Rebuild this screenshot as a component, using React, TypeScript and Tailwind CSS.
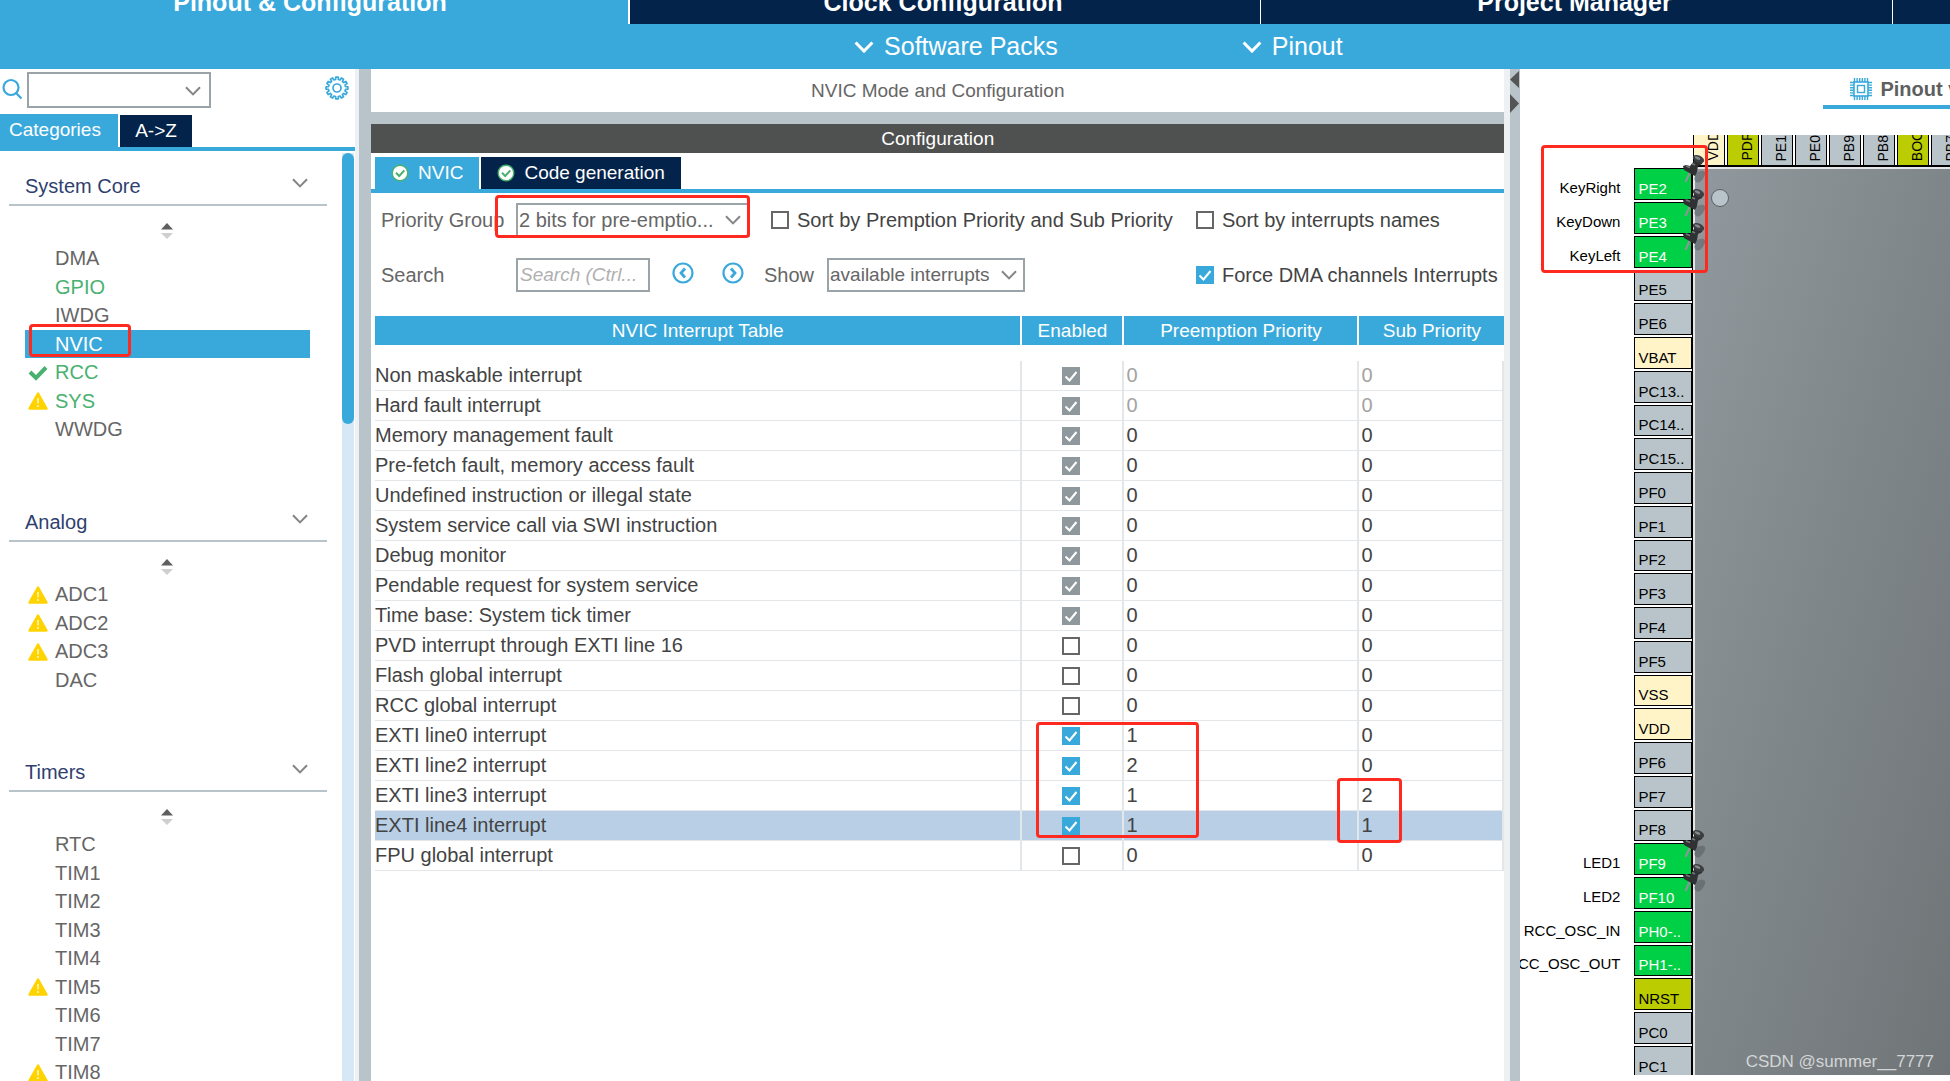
import { useState } from "react";

type Mark = "check" | "warn" | undefined;
type Item = { name: string; mark?: Mark; green?: boolean; active?: boolean };
type Group = { title: string; items: Item[] };

const groups: Group[] = [
  {
    title: "System Core",
    items: [
      { name: "DMA" },
      { name: "GPIO", green: true },
      { name: "IWDG" },
      { name: "NVIC", active: true },
      { name: "RCC", green: true, mark: "check" },
      { name: "SYS", green: true, mark: "warn" },
      { name: "WWDG" },
    ],
  },
  {
    title: "Analog",
    items: [
      { name: "ADC1", mark: "warn" },
      { name: "ADC2", mark: "warn" },
      { name: "ADC3", mark: "warn" },
      { name: "DAC" },
    ],
  },
  {
    title: "Timers",
    items: [
      { name: "RTC" },
      { name: "TIM1" },
      { name: "TIM2" },
      { name: "TIM3" },
      { name: "TIM4" },
      { name: "TIM5", mark: "warn" },
      { name: "TIM6" },
      { name: "TIM7" },
      { name: "TIM8", mark: "warn" },
    ],
  },
];

type Row = { name: string; on: boolean; locked?: boolean; fixed?: boolean; pre: number; sub: number; selected?: boolean };

const rows: Row[] = [
  { name: "Non maskable interrupt", on: true, locked: true, fixed: true, pre: 0, sub: 0 },
  { name: "Hard fault interrupt", on: true, locked: true, fixed: true, pre: 0, sub: 0 },
  { name: "Memory management fault", on: true, locked: true, pre: 0, sub: 0 },
  { name: "Pre-fetch fault, memory access fault", on: true, locked: true, pre: 0, sub: 0 },
  { name: "Undefined instruction or illegal state", on: true, locked: true, pre: 0, sub: 0 },
  { name: "System service call via SWI instruction", on: true, locked: true, pre: 0, sub: 0 },
  { name: "Debug monitor", on: true, locked: true, pre: 0, sub: 0 },
  { name: "Pendable request for system service", on: true, locked: true, pre: 0, sub: 0 },
  { name: "Time base: System tick timer", on: true, locked: true, pre: 0, sub: 0 },
  { name: "PVD interrupt through EXTI line 16", on: false, pre: 0, sub: 0 },
  { name: "Flash global interrupt", on: false, pre: 0, sub: 0 },
  { name: "RCC global interrupt", on: false, pre: 0, sub: 0 },
  { name: "EXTI line0 interrupt", on: true, pre: 1, sub: 0 },
  { name: "EXTI line2 interrupt", on: true, pre: 2, sub: 0 },
  { name: "EXTI line3 interrupt", on: true, pre: 1, sub: 2 },
  { name: "EXTI line4 interrupt", on: true, pre: 1, sub: 1, selected: true },
  { name: "FPU global interrupt", on: false, pre: 0, sub: 0 },
];

type Kind = "io" | "used" | "power" | "special";
type Pin = { name: string; kind: Kind; label?: string; pinned?: boolean };

const pinColor: Record<Kind, string> = {
  io: "bg-[#b8c4ca] text-black",
  used: "bg-[#00d046] text-white",
  power: "bg-[#fff4c8] text-black",
  special: "bg-[#bbcc01] text-black",
};

const io = (name: string): Pin => ({ name, kind: "io" });

const leftPins: Pin[] = [
  { name: "PE2", kind: "used", label: "KeyRight", pinned: true },
  { name: "PE3", kind: "used", label: "KeyDown", pinned: true },
  { name: "PE4", kind: "used", label: "KeyLeft", pinned: true },
  io("PE5"),
  io("PE6"),
  { name: "VBAT", kind: "power" },
  io("PC13.."),
  io("PC14.."),
  io("PC15.."),
  io("PF0"),
  io("PF1"),
  io("PF2"),
  io("PF3"),
  io("PF4"),
  io("PF5"),
  { name: "VSS", kind: "power" },
  { name: "VDD", kind: "power" },
  io("PF6"),
  io("PF7"),
  io("PF8"),
  { name: "PF9", kind: "used", label: "LED1", pinned: true },
  { name: "PF10", kind: "used", label: "LED2", pinned: true },
  { name: "PH0-..", kind: "used", label: "RCC_OSC_IN" },
  { name: "PH1-..", kind: "used", label: "RCC_OSC_OUT" },
  { name: "NRST", kind: "special" },
  io("PC0"),
  io("PC1"),
];

const topPins: Pin[] = [
  { name: "VDD", kind: "power" },
  { name: "PDR", kind: "special" },
  io("PE1"),
  io("PE0"),
  io("PB9"),
  io("PB8"),
  { name: "BOO", kind: "special" },
  io("PB7"),
];

function gearPath(teeth: number, outer: number, inner: number) {
  const step = (Math.PI * 2) / teeth;
  const pt = (r: number, a: number) => `${(12 + r * Math.cos(a)).toFixed(2)} ${(12 + r * Math.sin(a)).toFixed(2)}`;
  let d = "";
  for (let i = 0; i < teeth; i++) {
    const a = i * step - Math.PI / 2;
    d += `${i ? "L" : "M"}${pt(inner, a - step * 0.3)}L${pt(outer, a - step * 0.22)}L${pt(outer, a + step * 0.22)}L${pt(inner, a + step * 0.3)}`;
  }
  return d + "Z";
}

const Chevron = ({ className }: { className: string }) => (
  <svg viewBox="0 0 16 10" className={className} fill="none" stroke="currentColor" aria-hidden="true">
    <path d="M1 1.2 8 8.4 15 1.2" />
  </svg>
);

const Warn = () => (
  <svg viewBox="0 0 20 18" className="h-[18px] w-5" aria-hidden="true">
    <path d="M10 1.5 18.5 16.5H1.5Z" fill="#ffd300" stroke="#ffd300" strokeWidth="2.4" strokeLinejoin="round" />
    <path d="M10 6v5.500M10 13v2" stroke="#fff" strokeWidth="1.2" />
  </svg>
);

const Tick = () => (
  <svg viewBox="0 0 20 16" className="h-4 w-5" fill="none" aria-hidden="true">
    <path d="m2 7 6 6L18 2.5" stroke="#49b170" strokeWidth="4" />
  </svg>
);

const OkBadge = () => (
  <svg viewBox="0 0 18 18" className="size-[18px]" aria-hidden="true">
    <circle cx="9" cy="9" r="7.800" fill="#fff" stroke="#49b170" strokeWidth="1.400" />
    <path d="m5 8.8 3.2 3.2L13.3 6.400" fill="none" stroke="#49b170" strokeWidth="2" />
  </svg>
);

const Arrow = ({ d }: { d: string }) => (
  <svg viewBox="0 0 22 22" className="size-[22px]" fill="none" stroke="#39a9dc" aria-hidden="true">
    <circle cx="11" cy="11" r="9.5" strokeWidth="2.200" />
    <path d={d} strokeWidth="2.800" />
  </svg>
);

const SortIcon = () => (
  <svg viewBox="0 0 12 18" className="h-[18px] w-3" aria-hidden="true">
    <path d="M6 1 12 7.500H0Z" fill="#5f5f5f" />
    <path d="M0 11h12L6 17Z" fill="#cfcfcf" />
  </svg>
);

const PushPin = () => (
  <svg viewBox="0 0 28 34" className="absolute -top-4 left-[47px] z-10 h-[34px] w-7" aria-hidden="true">
    <path d="M14 20c5-4 12-3 8 4s-8 7-10 2Z" fill="#3c4348" opacity=".35" />
    <path d="M8 19 3.500 29" stroke="#8d9396" strokeWidth="2.2" />
    <path d="M12 3 21 8l-1 3-4 2-1 6-2 4-11-6-1-4 3-1 4 1 4-5Z" fill="#2f3133" />
    <ellipse cx="16.500" cy="6" rx="6" ry="3.600" transform="rotate(24 16.5 6)" fill="#3d4042" />
    <ellipse cx="15.500" cy="5" rx="3" ry="1.400" transform="rotate(24 15.5 5)" fill="#85898b" />
    <path d="m4 13 4 1.500M10 10.500l3 1.500" stroke="#777b7d" strokeWidth="1.500" />
  </svg>
);

function Check({ id, defaultChecked, locked }: { id: string; defaultChecked?: boolean; locked?: boolean }) {
  return (
    <span className="relative block size-[18px] shrink-0">
      <input
        id={id}
        type="checkbox"
        aria-label={id}
        defaultChecked={defaultChecked}
        disabled={locked}
        className="peer block size-[18px] appearance-none border-2 border-[#666] bg-white checked:border-[#39a9dc] checked:bg-[#39a9dc] checked:disabled:border-[#8f989c] checked:disabled:bg-[#8f989c]"
      />
      <svg viewBox="0 0 18 18" className="pointer-events-none absolute inset-0 hidden size-[18px] peer-checked:block" fill="none" aria-hidden="true">
        <path d="m3.500 9.500 4 4L14.500 5" stroke="#fff" strokeWidth="2" />
      </svg>
    </span>
  );
}

const Highlight = ({ className }: { className: string }) => (
  <span aria-hidden="true" className={`pointer-events-none absolute z-20 rounded border-3 border-[#ff2a1f] ${className}`} />
);

function Sidebar() {
  return (
    <aside className="flex w-[359px] shrink-0 flex-col border-r-4 border-[#eef1f3] bg-white">
      <div className="flex h-[45px] items-start pt-[3px] pr-[6px]">
        <svg viewBox="0 0 22 22" className="mt-[6px] ml-px size-[22px]" fill="none" stroke="#39a9dc" strokeWidth="2.2" aria-hidden="true">
          <circle cx="10" cy="9.500" r="7.500" />
          <path d="m15 15 5.500 5.500" />
        </svg>
        <div className="relative ml-1 w-[184px]">
          <select aria-label="Search peripherals" className="block h-9 w-full appearance-none border-2 border-[#9aa3a8] bg-white px-2">
            <option></option>
          </select>
          <Chevron className="pointer-events-none absolute top-[14px] right-[10px] h-[10px] w-4 stroke-2 text-[#858585]" />
        </div>
        <button type="button" aria-label="Settings" className="mt-1 ml-auto">
          <svg viewBox="0 0 24 24" className="size-6" fill="none" stroke="#39a9dc" strokeWidth="1.7" strokeLinejoin="round" aria-hidden="true">
            <path d={gearPath(12, 11, 8.6)} />
            <circle cx="12" cy="12" r="4" />
          </svg>
        </button>
      </div>
      <div className="flex items-end gap-[2px] border-b-4 border-[#39a9dc] text-[19px] text-white">
        <button type="button" className="h-[33px] w-[118px] bg-[#39a9dc] pb-px pl-[9px] text-left leading-6">Categories</button>
        <button type="button" className="h-8 w-[72px] bg-[#03234b] pb-px leading-6">A-&gt;Z</button>
      </div>
      <div className="flex min-h-0 flex-1 overflow-hidden pt-[2px]">
        <nav className="flex-1 pt-[13px] pr-[15px] pl-[9px] text-[20px]" aria-label="Peripherals">
          {groups.map((g) => (
            <section key={g.title} className="mb-[58px]">
              <button type="button" className="flex h-10 w-full items-center justify-between border-b-2 border-[#b8c4ca] pr-[19px] pl-4 text-[#2f3f70]">
                <span className="pt-[2px]">{g.title}</span>
                <Chevron className="mb-1 h-[10px] w-4 stroke-2 text-[#858585]" />
              </button>
              <div className="flex h-[38px] items-center justify-center pt-3 pr-[3px]">
                <SortIcon />
              </div>
              <ul className="pr-[17px] pl-4">
                {g.items.map((it) => (
                  <li key={it.name} className="relative leading-7 odd:leading-[29px]">
                    <a
                      href={`#${it.name}`}
                      className={`flex ${it.active ? "bg-[#39a9dc] text-white" : it.green ? "text-[#49b170]" : "text-[#666]"}`}
                    >
                      <span className="flex w-[30px] items-center pl-[3px]">
                        {it.mark === "warn" && <Warn />}
                        {it.mark === "check" && <Tick />}
                      </span>
                      {it.name}
                    </a>
                    {it.active && <Highlight className="-top-[6px] left-1 h-[33px] w-[102px]" />}
                  </li>
                ))}
              </ul>
            </section>
          ))}
        </nav>
        <div className="h-full w-[12px] shrink-0 bg-[#d6e8f5]">
          <div className="h-[271px] rounded-full bg-[#39a9dc]" />
        </div>
        <div className="w-px" />
      </div>
    </aside>
  );
}

function Controls() {
  return (
    <div className="flex flex-col gap-[21px] pt-[10px] pl-[6px] text-[20px] text-[#666]">
      <div className="flex items-center whitespace-nowrap">
        <label htmlFor="group" className="w-[135px] shrink-0">Priority Group</label>
        <div className="flex w-[680px] shrink-0 items-center gap-[21px]">
          <div className="relative w-[234px]">
            <select id="group" className="block h-[34px] w-full appearance-none border-2 border-[#9aa3a8] bg-white px-px">
              <option>2 bits for pre-emptio...</option>
            </select>
            <Chevron className="pointer-events-none absolute top-3 right-[9px] h-[10px] w-4 stroke-2 text-[#858585]" />
            <Highlight className="-top-2 right-0 h-[43px] w-[255px]" />
          </div>
          <div className="flex items-center gap-2 text-[#434343]">
            <Check id="sort-priority" />
            <label htmlFor="sort-priority">Sort by Premption Priority and Sub Priority</label>
          </div>
        </div>
        <div className="flex items-center gap-2 text-[#434343]">
          <Check id="sort-names" />
          <label htmlFor="sort-names">Sort by interrupts names</label>
        </div>
      </div>
      <div className="flex items-center whitespace-nowrap">
        <label htmlFor="search" className="w-[135px] shrink-0">Search</label>
        <div className="flex w-[680px] shrink-0 items-center">
          <input
            id="search"
            type="text"
            placeholder="Search (Ctrl..."
            className="h-[34px] w-[134px] border-2 border-[#9aa3a8] px-[2px] text-[19px] placeholder:text-[#b0b0b0] placeholder:italic"
          />
          <button type="button" aria-label="Previous match" className="mb-1 ml-[22px]">
            <Arrow d="m13 6.500-4 4.500 4 4.500" />
          </button>
          <button type="button" aria-label="Next match" className="mb-1 ml-7">
            <Arrow d="m9 6.500 4 4.500-4 4.500" />
          </button>
          <label htmlFor="show" className="mr-[13px] ml-5">Show</label>
          <div className="relative w-[198px]">
            <select id="show" className="block h-[34px] w-full appearance-none border-2 border-[#9aa3a8] bg-white px-px text-[19px]">
              <option>available interrupts</option>
            </select>
            <Chevron className="pointer-events-none absolute top-3 right-2 h-[10px] w-4 stroke-2 text-[#858585]" />
          </div>
        </div>
        <div className="flex items-center gap-2 text-[#434343]">
          <Check id="force-dma" defaultChecked />
          <label htmlFor="force-dma">Force DMA channels Interrupts</label>
        </div>
      </div>
    </div>
  );
}

function InterruptTable() {
  return (
    <table className="mt-6 w-full table-fixed border-separate border-spacing-0 text-[20px] text-[#434343]">
      <colgroup>
        <col />
        <col className="w-[102px]" />
        <col className="w-[235px]" />
        <col className="w-[145px]" />
      </colgroup>
      <thead>
        <tr className="text-[19px] leading-[29px] text-white">
          <th className="border-r-2 border-white bg-[#39a9dc] p-0 font-normal">NVIC Interrupt Table</th>
          <th className="border-r-2 border-white bg-[#39a9dc] p-0 font-normal">Enabled</th>
          <th className="border-r-2 border-white bg-[#39a9dc] p-0 font-normal">Preemption Priority</th>
          <th className="bg-[#39a9dc] p-0 font-normal">Sub Priority</th>
        </tr>
      </thead>
      <tbody className="before:block before:h-4 before:content-['']">
        {rows.map((r, i) => {
          const cell = "relative h-[30px] border-r-2 border-b border-[#e3e7ea] p-0 leading-[29px]";
          return (
            <tr key={r.name} className={r.selected ? "bg-[#b8cfe5]" : ""}>
              <td className={cell}>{r.name}</td>
              <td className={`${cell} pl-10`}>
                <Check id={`${r.name} enabled`} defaultChecked={r.on} locked={r.locked} />
                {i === 12 && <Highlight className="top-px left-[14px] h-[116px] w-[163px]" />}
              </td>
              <td className={`${cell} pl-[2px] ${r.fixed ? "text-[#a3a3a3]" : ""}`}>{r.pre}</td>
              <td className={`${cell} pl-[2px] ${r.fixed ? "text-[#a3a3a3]" : ""}`}>
                {r.sub}
                {i === 14 && <Highlight className="-top-[3px] -left-[22px] h-[65px] w-[65px]" />}
              </td>
            </tr>
          );
        })}
      </tbody>
    </table>
  );
}

function NvicPanel() {
  const [tab, setTab] = useState("nvic");
  return (
    <main className="flex min-w-0 flex-[1132_1_0] flex-col overflow-hidden border-r-[6px] border-[#eef1f3] bg-white">
      <h1 className="h-[43px] pt-[1px] text-center text-[19px] leading-[42px] text-[#666]">NVIC Mode and Configuration</h1>
      <div className="h-3 bg-[#b8c4ca]" />
      <h2 className="h-[29px] bg-[#4f5150] text-center text-[19px] leading-[29px] text-white">Configuration</h2>
      <div className="mt-1 flex items-end gap-[2px] border-b-4 border-[#39a9dc] pl-1 text-[19px] text-white">
        <button type="button" aria-pressed={tab === "nvic"} onClick={() => setTab("nvic")} className="flex h-8 items-center gap-[9px] bg-[#39a9dc] px-4">
          <OkBadge />
          NVIC
        </button>
        <button type="button" aria-pressed={tab === "code"} onClick={() => setTab("code")} className="flex h-8 items-center gap-[9px] bg-[#03234b] px-4">
          <OkBadge />
          Code generation
        </button>
      </div>
      <div className="pl-1">
        <Controls />
        <InterruptTable />
      </div>
    </main>
  );
}

function PinoutView() {
  return (
    <section className="relative flex min-w-0 flex-[429_1_0] flex-col overflow-hidden bg-white" aria-label="Pinout view">
      <div className="flex h-[66px] pl-[303px]">
        <button type="button" className="flex h-10 w-[200px] shrink-0 items-center gap-2 border-b-4 border-[#39a9dc] pt-1 pl-[27px] text-[20px] font-bold whitespace-nowrap text-[#5f5f5f]">
          <svg viewBox="0 0 22 22" className="size-[22px]" fill="none" stroke="#39a9dc" aria-hidden="true">
            <rect x="4" y="4" width="14" height="14" strokeWidth="1.600" />
            <rect x="7.500" y="7.500" width="7" height="7" strokeWidth="1.400" />
            <path d="M4.500 0v4M7.100 0v4M9.700 0v4M12.300 0v4M14.900 0v4M17.500 0v4M4.500 18v4M7.100 18v4M9.700 18v4M12.300 18v4M14.900 18v4M17.500 18v4M0 4.500h4M0 7.100h4M0 9.700h4M0 12.300h4M0 14.900h4M0 17.500h4M18 4.500h4M18 7.100h4M18 9.700h4M18 12.300h4M18 14.900h4M18 17.500h4" strokeWidth="1.400" />
          </svg>
          Pinout view
        </button>
      </div>
      <div className="relative mb-[6px] flex min-h-0 flex-1 overflow-hidden text-[15px] leading-5">
        <ul className="w-[173px] shrink-0 pt-[33px]">
          {leftPins.map((p) => (
            <li key={p.name} className="flex h-[34px] justify-end border-r border-black pb-[2px] nth-[4n]:h-[33px]">
              <span className="mr-[14px] mb-[2px] self-end text-black">{p.label}</span>
              <button type="button" className={`relative flex w-[58px] shrink-0 items-end border border-black pl-[3px] ${pinColor[p.kind]}`}>
                {p.name}
                {p.pinned && <PushPin />}
              </button>
            </li>
          ))}
        </ul>
        <div className="flex min-w-0 flex-1 flex-col">
          <div className="flex h-8 overflow-hidden border-b-2 border-black">
            {topPins.map((p) => (
              <button
                key={p.name}
                type="button"
                className={`mr-[2px] flex h-[30px] w-8 shrink-0 items-end justify-end border-x border-black pr-px text-[14px] ${pinColor[p.kind]}`}
              >
                <span className="rotate-180 pt-1 whitespace-nowrap [writing-mode:vertical-rl]">{p.name}</span>
              </button>
            ))}
          </div>
          <div className="flex-1 border-t-2 border-l-2 border-[#e4e6e8] bg-linear-to-br from-[#91999e] via-[#7f8689] to-[#6f7477] pt-5 pl-4">
            <div className="size-[18px] rounded-full border border-[#5a6165] bg-[#b8c4ca]" />
          </div>
        </div>
        <Highlight className="top-[10px] left-[21px] h-[128px] w-[167px]" />
        <p className="absolute right-4 bottom-[3px] text-[17px] text-[#d3d5d6]">CSDN @summer__7777</p>
      </div>
    </section>
  );
}

export default function App() {
  return (
    <div className="flex h-screen flex-col overflow-hidden bg-white font-['Liberation_Sans',Arial,sans-serif]">
      <nav className="-mt-[18px] -ml-1 grid h-[42px] shrink-0 grid-cols-[1fr_1fr_1fr_58px] text-[25px] font-bold text-white" aria-label="Main">
        <button type="button" className="bg-[#39a9dc] pr-1">Pinout &amp; Configuration</button>
        <button type="button" className="border-l-2 border-white bg-[#03234b] pr-1">Clock Configuration</button>
        <button type="button" className="border-l border-white bg-[#03234b] pr-1">Project Manager</button>
        <button type="button" aria-label="Tools" className="border-l border-white bg-[#03234b]" />
      </nav>
      <div className="flex h-[45px] shrink-0 items-center gap-[184px] bg-[#39a9dc] pl-[43.8%] text-[25px] whitespace-nowrap text-white">
        <button type="button" className="flex items-center gap-[10px]">
          <Chevron className="h-3 w-5 stroke-[2.500]" />
          Software Packs
        </button>
        <button type="button" className="flex items-center gap-[10px]">
          <Chevron className="h-3 w-5 stroke-[2.500]" />
          Pinout
        </button>
      </div>
      <div className="flex min-h-0 flex-1">
        <Sidebar />
        <div className="w-3 shrink-0 bg-[#b8c4ca]" />
        <NvicPanel />
        <div className="w-[10px] shrink-0 bg-[#b8c4ca]">
          <svg viewBox="0 0 10 48" className="h-12 w-[10px]" fill="#555" aria-hidden="true">
            <path d="M9 2v17L0 10.500ZM0 25v19l9-9.500Z" />
          </svg>
        </div>
        <PinoutView />
      </div>
    </div>
  );
}
